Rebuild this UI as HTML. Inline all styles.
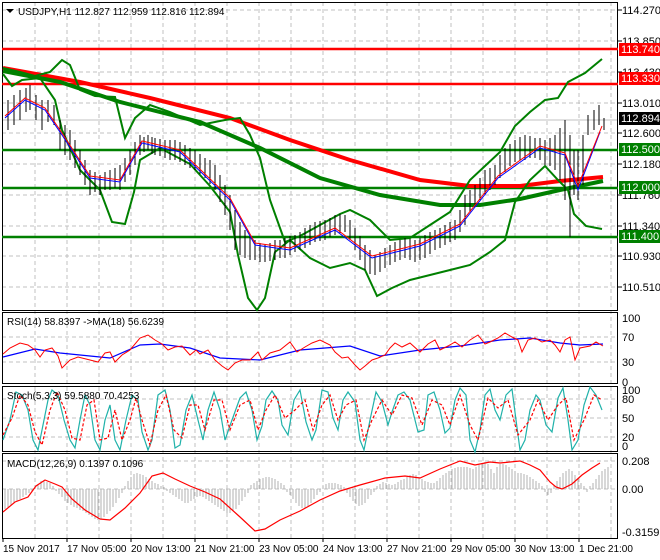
<!DOCTYPE html>
<html><head><meta charset="utf-8"><style>
html,body{margin:0;padding:0;background:#fff;}
svg{display:block;font-family:"Liberation Sans",sans-serif;}
</style></head><body>
<svg width="660" height="560" viewBox="0 0 660 560" xmlns="http://www.w3.org/2000/svg">
<rect width="660" height="560" fill="#fff"/>
<g stroke="#c0c0c0" stroke-dasharray="4,3" stroke-width="1">
<path d="M35 2V538M67 2V538M99 2V538M131 2V538M163 2V538M195 2V538M227 2V538M259 2V538M291 2V538M323 2V538M355 2V538M387 2V538M419 2V538M451 2V538M483 2V538M515 2V538M547 2V538M579 2V538M611 2V538"/>
<path d="M2 10H618M2 41H618M2 72H618M2 103H618M2 133H618M2 164H618M2 195H618M2 226H618M2 256H618M2 287H618"/>
<path d="M2 337H618M2 362H618M2 399H618M2 418H618M2 437H618M2 461H618M2 489H618"/>
</g>
<line x1="2" y1="120" x2="618" y2="120" stroke="#c0c0c0"/>
<g fill="none" stroke="#000" stroke-width="1">
<rect x="2.5" y="2.5" width="615" height="308"/>
<rect x="2.5" y="312.5" width="615" height="71"/>
<rect x="2.5" y="386.5" width="615" height="65"/>
<rect x="2.5" y="453.5" width="615" height="85"/>
</g>
<g stroke-width="2.5">
<line x1="2" y1="49" x2="618" y2="49" stroke="#ff0000"/>
<line x1="2" y1="84" x2="618" y2="84" stroke="#ff0000"/>
<line x1="2" y1="150" x2="618" y2="150" stroke="#008000"/>
<line x1="2" y1="188" x2="618" y2="188" stroke="#008000"/>
<line x1="2" y1="237" x2="618" y2="237" stroke="#008000"/>
</g>
<polyline fill="none" stroke="#ff0000" stroke-width="4" points="3,68 80,82 150,98 230,118 290,140 350,160 420,180 470,186 520,186 560,181 603,177"/>
<polyline fill="none" stroke="#008000" stroke-width="4" points="3,71 60,82 120,102 200,122 260,148 320,178 380,195 440,205 480,205 520,199 560,190 603,181"/>
<polyline fill="none" stroke="#008000" stroke-width="2" points="3,68 20,72 35,76 50,72 62,60 70,65 80,90 95,96 115,97 125,138 135,118 150,105 170,112 200,125 225,120 240,118 250,135 260,158 270,200 285,242 300,236 320,225 340,214 350,210 370,220 390,240 410,238 430,225 450,212 470,180 485,166 500,152 515,126 530,112 545,100 558,98 568,82 585,73 602,59"/>
<polyline fill="none" stroke="#008000" stroke-width="2" points="3,74 12,86 22,80 40,78 55,100 62,130 80,170 100,190 112,222 125,224 134,192 140,160 160,148 190,164 210,186 230,212 238,255 248,298 257,310 265,298 275,252 290,240 310,258 330,268 350,263 365,270 377,296 392,288 410,280 430,275 450,270 470,265 490,252 505,240 515,202 530,180 545,166 558,180 568,190 574,214 586,226 602,229"/>
<g stroke="#000" stroke-width="1">
<path d="M8 100V130M14 95V125M20 90V120M26 88V112M30 85V110M36 95V120M42 100V130M48 100V122M54 105V125M60 120V150M65 125V155M70 130V160M75 140V168M80 150V175M85 160V185M90 170V195M95 172V192M100 175V195M105 172V190M110 170V190M115 168V188M120 165V190M125 158V182M130 150V175M135 142V165M140 135V155M144 137V152M148 135V150M152 137V154M155 138V155M160 139V156M165 140V158M170 140V160M175 140V160M180 142V162M185 145V165M190 148V168M195 150V170M200 154V174M205 158V178M210 160V184M215 165V190M220 175V202M225 185V215M230 195V230M235 210V250M240 222V255M245 230V258M250 236V260M255 240V260M260 243V262M265 245V262M270 243V261M275 240V260M280 240V258M285 238V258M290 236V255M295 235V252M300 232V250M305 228V248M310 225V245M315 222V242M320 221V241M325 220V240M330 218V237M335 215V235M340 214V233M345 215V232M350 220V240M355 228V250M360 236V260M365 245V270M370 250V274M375 255V275M380 252V272M385 248V268M390 245V265M395 242V262M400 240V260M405 238V258M410 239V260M415 240V262M420 238V260M425 235V258M430 232V254M435 230V250M440 228V248M445 225V245M450 222V242M455 220V240M460 210V232M465 195V225M470 190V212M475 185V205M480 178V200M485 170V195M490 168V190M495 165V185M500 155V178M505 148V172M510 144V166M515 140V162M520 137V160M525 135V160M530 136V158M535 138V158M540 138V160M545 140V165M550 138V166M555 135V170M560 128V180M565 120V200M570 135V237M574 150V195M578 150V200M583 135V185M588 115V135M594 110V130M599 105V125M604 118V130"/>
</g>
<polyline fill="none" stroke="#0000ff" stroke-width="1" points="5,118 25,100 45,110 62,135 90,178 120,182 142,143 180,152 230,200 255,245 290,250 335,230 372,258 420,246 460,226 498,178 540,148 565,155 578,190 600,132"/>
<polyline fill="none" stroke="#ff0000" stroke-width="1" points="5,116 25,98 45,108 62,133 90,176 120,180 142,141 180,150 230,198 255,243 290,248 335,228 372,256 420,244 460,224 498,176 540,146 565,153 578,186 602,126"/>
<polyline fill="none" stroke="#0000ff" stroke-width="1.2" points="3,357 35,349 60,353 90,356 110,358 140,345 160,344 190,348 220,358 260,360 300,350 350,346 380,356 420,350 460,346 500,340 530,338 560,343 580,345 603,344"/>
<polyline fill="none" stroke="#ff0000" stroke-width="1" points="3,354 10,348 20,343 28,345 35,350 40,357 45,350 52,348 58,356 62,368 70,360 78,357 90,360 98,362 105,353 110,352 115,362 122,355 130,350 140,338 148,335 155,340 162,344 168,350 175,347 182,346 190,355 196,350 200,354 208,350 215,360 222,366 228,370 235,363 242,360 250,360 258,352 262,360 270,353 280,350 290,342 297,352 305,347 312,343 320,340 330,345 335,352 342,358 348,357 355,365 360,370 365,366 372,360 378,358 385,355 390,348 395,343 402,347 410,343 420,352 428,344 435,340 440,350 448,346 455,342 462,347 470,340 478,335 485,344 490,342 498,338 505,333 512,337 518,340 522,352 528,340 535,338 542,342 550,340 555,345 560,352 565,340 570,337 575,360 580,348 590,346 596,342 603,346"/>
<polyline fill="none" stroke="#20b2aa" stroke-width="1.2" points="3,440 10,420 16,392 22,395 28,410 33,440 38,450 42,430 48,400 52,390 58,395 64,420 70,440 75,448 80,420 85,395 90,405 95,440 100,450 105,420 110,405 115,440 120,450 126,420 132,395 138,400 142,432 148,450 152,440 158,395 165,390 170,410 175,448 180,445 186,410 192,395 198,420 203,440 208,410 214,392 220,410 225,440 232,420 240,398 246,392 252,410 257,440 262,426 266,400 272,391 278,400 282,425 288,435 294,400 300,390 306,422 312,440 316,430 322,390 328,392 333,418 338,430 343,400 348,392 355,402 360,440 364,450 370,420 376,392 382,402 388,425 392,412 398,395 404,392 410,400 418,432 424,430 428,395 434,392 440,410 445,433 450,428 455,400 460,388 466,395 470,440 475,452 480,430 485,395 490,389 495,410 500,420 506,395 512,389 516,420 520,450 525,440 530,410 536,395 540,400 546,425 552,432 558,398 563,388 568,420 572,450 578,440 584,405 590,387 596,395 602,410"/>
<polyline fill="none" stroke="#ff0000" stroke-width="1.2" stroke-dasharray="3,2" points="3,435 12,418 20,395 28,405 35,432 42,445 50,410 57,392 65,410 72,438 80,440 87,405 94,400 100,440 108,438 115,410 122,440 130,420 136,398 142,420 150,445 158,410 166,395 174,430 182,438 190,405 198,405 205,430 214,400 222,400 230,430 240,405 250,400 258,430 266,410 275,395 285,418 295,410 305,400 313,430 322,405 330,395 338,420 346,405 356,400 364,440 372,420 382,400 392,415 402,395 412,398 422,425 432,400 442,405 450,425 460,395 470,425 478,440 488,398 498,408 508,400 518,435 530,420 538,400 548,420 558,405 566,398 574,440 584,420 594,395 602,400"/>
<g stroke="#b0b0b0" stroke-width="1">
<path d="M5 489v20M8 489v18M11 489v16M14 489v14M17 489v12M20 489v10M23 489v8M26 489v6M29 489v4M32 489v2M35 489v-3M38 489v-5M41 489v-8M44 489v-9M47 489v-7M50 489v-6M53 489v-3M56 489v2M59 489v5M62 489v8M65 489v12M68 489v14M71 489v16M74 489v18M77 489v19M80 489v21M83 489v22M86 489v24M89 489v26M92 489v28M95 489v30M98 489v31M101 489v30M104 489v28M107 489v25M110 489v22M113 489v18M116 489v14M119 489v9M122 489v4M125 489v-3M128 489v-8M131 489v-12M134 489v-15M137 489v-16M140 489v-15M143 489v-14M146 489v-12M149 489v-10M152 489v-8M155 489v-6M158 489v-5M161 489v-3M164 489v-2M167 489v2M170 489v4M173 489v6M176 489v8M179 489v10M182 489v12M185 489v14M188 489v14M191 489v12M194 489v10M197 489v8M200 489v7M203 489v8M206 489v10M209 489v12M212 489v14M215 489v16M218 489v18M221 489v20M224 489v22M227 489v24M230 489v24M233 489v22M236 489v20M239 489v16M242 489v12M245 489v8M248 489v4M251 489v-4M254 489v-6M257 489v-8M260 489v-10M263 489v-11M266 489v-12M269 489v-12M272 489v-11M275 489v-10M278 489v-8M281 489v-6M284 489v-4M287 489v3M290 489v6M293 489v10M296 489v14M299 489v17M302 489v19M305 489v19M308 489v17M311 489v14M314 489v10M317 489v6M320 489v3M323 489v-3M326 489v-5M329 489v-6M332 489v-6M335 489v-6M338 489v-5M341 489v-4M344 489v-2M347 489v4M350 489v8M353 489v12M356 489v15M359 489v17M362 489v16M365 489v14M368 489v10M371 489v6M374 489v3M377 489v-3M380 489v-5M383 489v-7M386 489v-6M389 489v-5M392 489v-4M395 489v-5M398 489v-7M401 489v-9M404 489v-10M407 489v-12M410 489v-14M413 489v-15M416 489v-14M419 489v-12M422 489v-10M425 489v-8M428 489v-7M431 489v-6M434 489v-6M437 489v-8M440 489v-11M443 489v-14M446 489v-16M449 489v-18M452 489v-20M455 489v-21M458 489v-22M461 489v-22M464 489v-22M467 489v-22M470 489v-21M473 489v-20M476 489v-22M479 489v-24M482 489v-26M485 489v-27M488 489v-25M491 489v-20M494 489v-16M497 489v-22M500 489v-25M503 489v-25M506 489v-24M509 489v-22M512 489v-20M515 489v-18M518 489v-16M521 489v-16M524 489v-15M527 489v-14M530 489v-12M533 489v-10M536 489v-8M539 489v-6M542 489v-3M545 489v3M548 489v6M551 489v4M554 489v-4M557 489v-8M560 489v-12M563 489v-16M566 489v-18M569 489v-20M572 489v-18M575 489v-14M578 489v-10M581 489v-6M584 489v-3M587 489v3M590 489v-3M593 489v-6M596 489v-10M599 489v-14M602 489v-18M605 489v-20M608 489v-22"/>
</g>
<polyline fill="none" stroke="#ff0000" stroke-width="1.2" points="3,512 15,502 28,497 36,486 45,480 55,484 62,487 72,499 85,510 100,519 110,520 125,508 140,493 152,476 163,473 175,479 190,486 205,492 220,499 240,517 255,531 265,529 280,520 300,511 320,500 340,491 360,485 385,478 405,476 420,478 440,469 460,461 475,465 490,462 500,463 510,462 520,461 530,465 540,470 550,482 556,487 562,489 572,484 582,475 592,468 600,463"/>
<g font-size="11" fill="#000">
<text x="622" y="14">114.270</text>
<text x="622" y="45">113.850</text>
<text x="622" y="76">113.430</text>
<text x="622" y="107">113.010</text>
<text x="622" y="137">112.600</text>
<text x="622" y="168">112.180</text>
<text x="622" y="199">111.760</text>
<text x="622" y="230">111.340</text>
<text x="622" y="260">110.930</text>
<text x="622" y="291">110.510</text>
<text x="622" y="322">100</text>
<text x="622" y="341">70</text>
<text x="622" y="366">30</text>
<text x="622" y="386">0</text>
<text x="622" y="394">100</text>
<text x="622" y="403">80</text>
<text x="622" y="422">50</text>
<text x="622" y="441">20</text>
<text x="622" y="450">0</text>
<text x="622" y="465">0.208</text>
<text x="622" y="493">0.00</text>
<text x="622" y="536">-0.3159</text>
</g>
<g font-size="11">
<rect x="619" y="43" width="41" height="13" fill="#ff0000"/><text x="621" y="53" fill="#fff">113.740</text>
<rect x="619" y="72" width="41" height="13" fill="#ff0000"/><text x="621" y="82" fill="#fff">113.330</text>
<rect x="619" y="112" width="41" height="13" fill="#000"/><text x="621" y="122" fill="#fff">112.894</text>
<rect x="619" y="143" width="41" height="13" fill="#008000"/><text x="621" y="153" fill="#fff">112.500</text>
<rect x="619" y="181" width="41" height="13" fill="#008000"/><text x="621" y="191" fill="#fff">112.000</text>
<rect x="619" y="230" width="41" height="13" fill="#008000"/><text x="621" y="240" fill="#fff">111.400</text>
</g>
<g stroke="#000"><path d="M618 10h4M618 41h4M618 72h4M618 103h4M618 133h4M618 164h4M618 195h4M618 226h4M618 256h4M618 287h4"/>
<path d="M3 538v4M67 538v4M131 538v4M195 538v4M259 538v4M323 538v4M387 538v4M451 538v4M515 538v4M579 538v4"/></g>
<g font-size="10" fill="#000">
<text x="3" y="552">15 Nov 2017</text>
<text x="67" y="552">17 Nov 05:00</text>
<text x="131" y="552">20 Nov 13:00</text>
<text x="195" y="552">21 Nov 21:00</text>
<text x="259" y="552">23 Nov 05:00</text>
<text x="323" y="552">24 Nov 13:00</text>
<text x="387" y="552">27 Nov 21:00</text>
<text x="451" y="552">29 Nov 05:00</text>
<text x="515" y="552">30 Nov 13:00</text>
<text x="579" y="552">1 Dec 21:00</text>
</g>
<path d="M6 9h8l-4 4z" fill="#000"/>
<g font-size="10" fill="#000">
<text x="18" y="15">USDJPY,H1  112.827 112.959 112.816 112.894</text>
<text x="7" y="325">RSI(14) 58.8397  -&gt;MA(18) 56.6239</text>
<text x="7" y="399">Stoch(5,3,3) 59.5880 70.4253</text>
<text x="7" y="467">MACD(12,26,9) 0.1397 0.1096</text>
</g>
</svg>
</body></html>
